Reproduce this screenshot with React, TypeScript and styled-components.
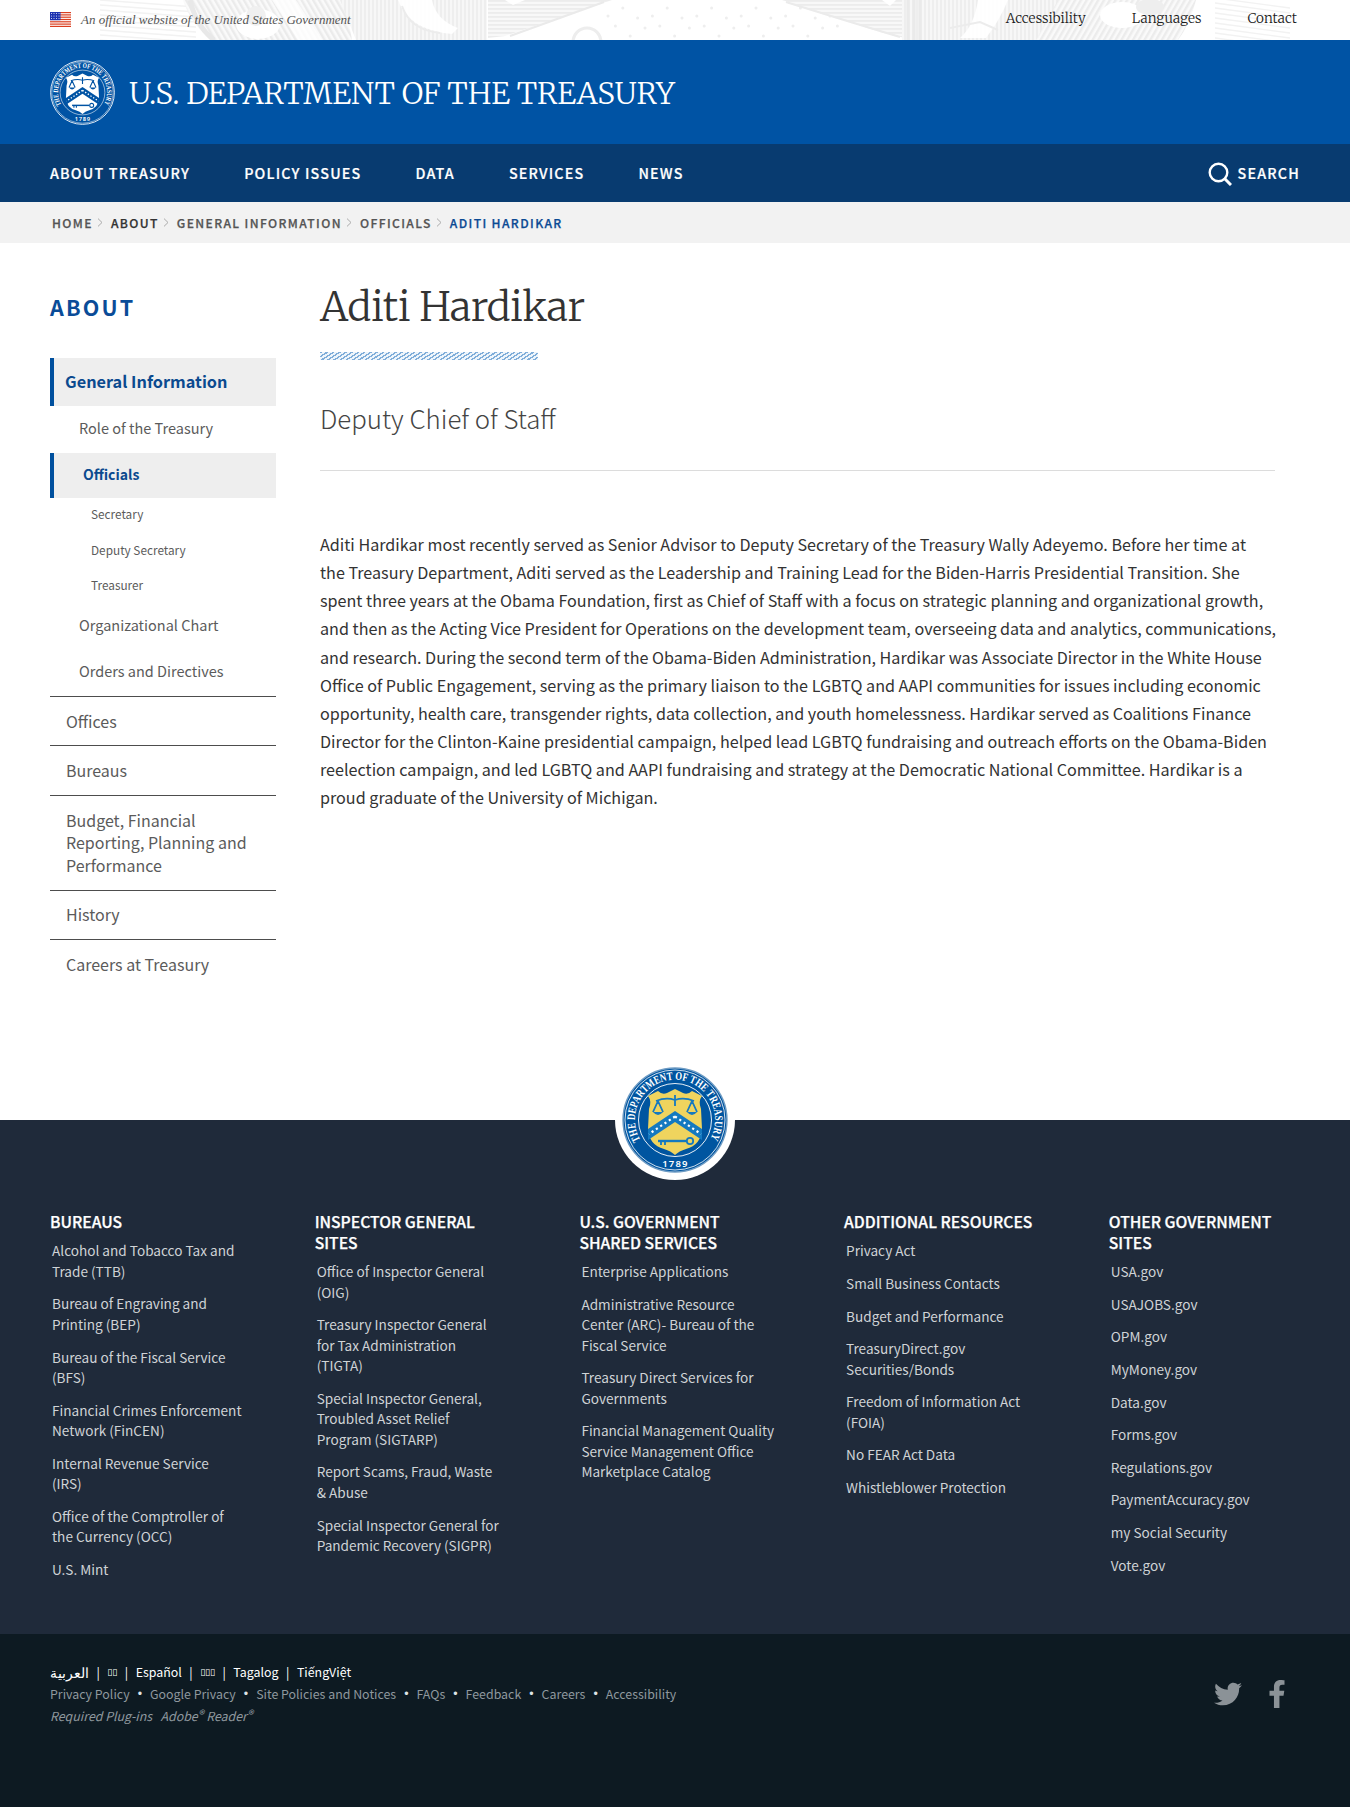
import React from "react";
import styled, { createGlobalStyle } from "styled-components";
import { FaTwitter, FaFacebookF } from "react-icons/fa";

const sans = `"Noto Sans CJK SC", "Noto Sans", sans-serif`;
const serif = `"Merriweather", "Liberation Serif", serif`;

const Global = createGlobalStyle`
  * { box-sizing: border-box; }
  body { margin: 0; background: #fff; color: #323a45; font-family: ${sans}; }
  a { color: inherit; text-decoration: none; }
  ul { list-style: none; margin: 0; padding: 0; }
`;

const Banner = styled.div`
  height: 40px;
  display: grid;
  background: #fff;
  overflow: hidden;
  > * { grid-area: 1 / 1; }
`;
const Engraving = styled.svg`
  width: 1350px;
  height: 40px;
  display: block;
  opacity: 0.9;
`;
const BannerRow = styled.div`
  display: flex;
  align-items: flex-start;
  justify-content: space-between;
  padding: 9px 53px 0 50px;
  z-index: 1;
`;
const Official = styled.div`
  display: flex;
  align-items: center;
  gap: 10px;
  padding-top: 2px;
  font: italic 13px/17px "Liberation Serif", serif;
  color: #555;
`;
const TopLinks = styled.nav`
  display: flex;
  gap: 46px;
  font: 300 13.6px/20px ${serif};
  color: #1c1c1c;
`;

const Brand = styled.header`
  height: 104px;
  display: flex;
  align-items: center;
  gap: 14px;
  padding: 0 50px;
  background: #0053a4;
`;
const BrandName = styled.div`
  padding-top: 2px;
  font: 300 30px/40px ${serif};
  letter-spacing: -0.19px;
  color: #fff;
  white-space: nowrap;
`;
const Nav = styled.nav`
  height: 58px;
  display: flex;
  align-items: center;
  gap: 54px;
  padding: 0 50px 2px;
  background: #083b70;
  color: #fff;
  font-size: 14.3px;
  font-weight: 500;
  letter-spacing: 1.18px;
  -webkit-text-stroke: 0.2px currentColor;
`;
const SearchLink = styled.a`
  display: flex;
  align-items: center;
  gap: 6px;
  margin-left: auto;
  svg { margin-top: 4px; }
`;

const Crumbs = styled.nav`
  height: 41px;
  display: flex;
  align-items: center;
  padding: 0 52px 1px;
  background: #f2f2f2;
  font-size: 12.1px;
  font-weight: 500;
  letter-spacing: 1.38px;
  -webkit-text-stroke: 0.25px currentColor;
`;
const Crumb = styled.a<{ $current?: boolean; $dark?: boolean }>`
  color: ${(p) => (p.$current ? "#0b4a94" : p.$dark ? "#333" : "#555")};
`;
const Chevron = styled.svg`
  width: 6px;
  height: 9px;
  margin: 1px 8px 0 4px;
`;

const Main = styled.main`
  display: grid;
  grid-template-columns: 226px 955px;
  column-gap: 44px;
  padding: 0 50px;
  height: 877px;
`;
const Side = styled.aside`
  padding-top: 49px;
`;
const SideTitle = styled.h2`
  margin: 0 0 36px;
  font-size: 21.5px;
  line-height: 30px;
  font-weight: 700;
  letter-spacing: 2.2px;
  color: #0a4c98;
`;
const Item = styled.li<{ $level: 1 | 2 | 3; $active?: boolean; $rule?: boolean }>`
  display: flex;
  align-items: center;
  color: ${(p) => (p.$active ? "#0b4a8f" : "#5b5b5b")};
  font-weight: ${(p) => (p.$active ? 700 : 400)};
  background: ${(p) => (p.$active ? "#eee" : "transparent")};
  border-left: ${(p) => (p.$active ? "4px solid #00509e" : "0")};
  border-top: ${(p) => (p.$rule ? "1px solid #4d4d4d" : "0")};
  font-size: ${(p) => (p.$level === 1 ? (p.$active ? 16.3 : 16) : p.$level === 2 ? (p.$active ? 14 : 14.5) : 11.8)}px;
  line-height: 22.75px;
  min-height: ${(p) => (p.$rule ? 0 : p.$level === 1 ? 48 : p.$level === 2 ? (p.$active ? 45 : 46.5) : 35.2)}px;
  padding: ${(p) => (p.$rule ? "12.8px 20px 12.8px" : p.$level === 3 ? "0 20px 0.8px" : "0 20px 2px")}
    ${(p) => (p.$active ? [11, 29][p.$level - 1] : [16, 29, 41][p.$level - 1])}px;
`;

const Article = styled.article`
  padding-top: 37px;
`;
const Name = styled.h1`
  margin: 0 0 18px;
  font: 300 40px/54px ${serif};
  letter-spacing: -0.35px;
  color: #333;
`;
const Hatch = styled.div`
  width: 218px;
  height: 8px;
  background: repeating-linear-gradient(147deg, #7fadd9 0 1.4px, #eef5fb 1.4px 3.4px);
`;
const Role = styled.h3`
  margin: 0;
  padding: 35px 0 29px;
  border-bottom: 1px solid #dcdcdc;
  font-size: 25.8px;
  line-height: 46px;
  font-weight: 300;
  color: #444;
`;
const Bio = styled.p`
  margin: 59px 0 0;
  font-size: 16.15px;
  line-height: 28.13px;
  white-space: pre;
  color: #333;
`;

const Footer = styled.footer`
  background: #1f2a3a;
  color: #d6d7d9;
`;
const SealWrap = styled.div`
  display: flex;
  justify-content: center;
  height: 91px;
`;
const SealDisc = styled.div`
  width: 120px;
  height: 120px;
  margin-top: -60px;
  border-radius: 50%;
  background: #fff;
  display: flex;
  align-items: center;
  justify-content: center;
`;
const Columns = styled.div`
  display: grid;
  grid-template-columns: repeat(5, 264.7px);
  height: 423px;
  padding: 1px 0 0 50px;
`;
const ColTitle = styled.h4`
  margin: 0 0 7.6px;
  font-size: 15.7px;
  line-height: 20.8px;
  font-weight: 500;
  color: #fff;
  white-space: pre;
  -webkit-text-stroke: 0.25px currentColor;
`;
const ColLink = styled.li`
  padding-left: 2px;
  margin-bottom: 12.1px;
  font-size: 13.6px;
  line-height: 20.5px;
  white-space: pre;
  color: #cfd3d6;
`;
const Bottom = styled.div`
  display: flex;
  justify-content: space-between;
  height: 173px;
  padding: 27px 59px 0 50px;
  background: #0d1a22;
`;
const Legal = styled.div`
  font-size: 12.4px;
  line-height: 22px;
  color: #8f989e;
`;
const Langs = styled.div`
  display: flex;
  gap: 7.5px;
  color: #fff;
`;
const Arabic = styled.span`
  font-size: 13.5px;
`;
const Tofu = styled.span`
  font: 9px/22px "DejaVu Sans", sans-serif;
`;
const LegalRow = styled.div`
  display: flex;
  gap: 8px;
`;
const Dot = styled.span`
  font-family: "Liberation Sans", sans-serif;
  color: #dfe3e6;
`;
const Plugins = styled.div`
  font-style: italic;
  sup { font-size: 12px; line-height: 0; vertical-align: 2px; }
`;
const Social = styled.div`
  display: flex;
  gap: 21px;
  padding-top: 19px;
  color: #8b9297;
`;

const Flag = () => (
  <svg width="21" height="15" viewBox="0 0 21 15">
    <rect width="21" height="15" fill="#fff" />
    {[0, 1, 2, 3, 4, 5, 6].map((i) => (
      <rect key={i} y={i * 2.3} width="21" height="1.2" fill="#db3e1f" />
    ))}
    <rect width="10.5" height="8.2" fill="#1e33b1" />
    {[0, 1, 2].map((r) =>
      [0, 1, 2, 3].map((c) => <circle key={`${r}${c}`} cx={1.5 + c * 2.5} cy={1.5 + r * 2.5} r="0.5" fill="#fff" />)
    )}
  </svg>
);

type SealProps = { size: number; id: string; disc: string; ring: string; shield: string; mark: string };
const Seal = ({ size, id, disc, ring, shield, mark }: SealProps) => (
  <svg width={size} height={size} viewBox="0 0 106 106">
    <defs>
      <path id={id} d="M18.5 73 A40 40 0 1 1 87.5 73" />
    </defs>
    <circle cx="53" cy="53" r="52" fill={disc} stroke={ring} strokeWidth="1.4" />
    <circle cx="53" cy="53" r="50" fill="none" stroke="#fff" strokeWidth="0.8" />
    <circle cx="53" cy="53" r="36.5" fill="none" stroke="#fff" strokeWidth="0.9" />
    <text fill="#fff" fontFamily="Liberation Serif, serif" fontWeight="700" fontSize="11.5" textLength="166" lengthAdjust="spacingAndGlyphs">
      <textPath href={`#${id}`}>THE DEPARTMENT OF THE TREASURY</textPath>
    </text>
    <text x="53.5" y="100" textAnchor="middle" fill="#fff" fontFamily="Noto Sans, sans-serif" fontWeight="600" fontSize="9.5" letterSpacing="1.2">1789</text>
    <path d="M26 29 L36 24 Q40 28 45 26 L53 22 L61 26 Q66 28 70 24 L80 29 Q76 34 79 42 L80 62 Q79 78 64 82 Q57 84 53 88 Q49 84 42 82 Q27 78 26 62 L27 42 Q30 34 26 29Z" fill={shield} />
    <path d="M53 44 L80 62 V73 L53 55 L26 73 V62Z" fill={mark} />
    <path d="M53 49.5 L79 67 M53 49.5 L27 67" stroke="#fff" strokeWidth="2.2" strokeDasharray="2.2 3" fill="none" />
    <g stroke={mark} strokeWidth="1.8" fill="none">
      <path d="M34 34 Q44 30 53 33 Q62 30 72 34 M53 28 V39 M36 34 L31 45 M36 34 L41 45 M70 34 L65 45 M70 34 L75 45" />
      <path d="M36 74 H64" strokeWidth="2.4" />
      <circle cx="68" cy="74" r="3.2" />
      <path d="M39 74 V78 M43 74 V78" />
    </g>
    <path d="M31 45 Q36 51 41 45Z M65 45 Q70 51 75 45Z" fill={mark} />
  </svg>
);

const range = (n: number) => Array.from({ length: n }, (_, i) => i);

const BannerArt = () => (
  <Engraving viewBox="0 0 1350 40">
    <defs>
      <pattern id="vline" width="4" height="4" patternUnits="userSpaceOnUse">
        <rect width="4" height="4" fill="#f7f7f7" /><rect width="2" height="4" fill="#ededed" />
      </pattern>
      <pattern id="hline" width="4" height="4" patternUnits="userSpaceOnUse">
        <rect width="4" height="4" fill="#f8f8f8" /><rect width="4" height="1.8" fill="#ebebeb" />
      </pattern>
      <pattern id="fall" width="5" height="5" patternUnits="userSpaceOnUse" patternTransform="rotate(-30)">
        <rect width="5" height="5" fill="#fafafa" /><rect width="2.4" height="5" fill="#e9e9e9" />
      </pattern>
      <pattern id="rise" width="5" height="5" patternUnits="userSpaceOnUse" patternTransform="rotate(30)">
        <rect width="5" height="5" fill="#fafafa" /><rect width="2.4" height="5" fill="#eaeaea" />
      </pattern>
    </defs>
    <g stroke="#f1f1f1" strokeWidth="1.3">
      {range(9).map((i) => <path key={i} d={`M100 ${i * 5} L196 ${i * 5 + 7} M1215 ${i * 5 - 2} L1290 ${i * 5 + 8}`} />)}
    </g>
    <path d="M183 0 H345 L352 40 H212 Q192 26 183 0Z" fill="url(#fall)" />
    <path d="M190 0 Q196 26 214 40" stroke="#e6e6e6" strokeWidth="5" fill="none" />
    <ellipse cx="258" cy="24" rx="22" ry="15" fill="#fff" />
    <circle cx="256" cy="16" r="10" fill="#efefef" />
    <path d="M272 0 H296 L322 40 H298Z" fill="#fff" opacity="0.8" />
    <path d="M340 0 H487 V40 H356Z" fill="url(#vline)" />
    <path d="M398 0 H432 Q436 20 458 28 L452 34 Q408 30 398 0Z" fill="#fff" opacity="0.9" />
    <path d="M402 6 Q410 30 440 33" stroke="#ebebeb" strokeWidth="2" fill="none" />
    <path d="M488 0 H612 L505 36 L488 38Z" fill="url(#hline)" />
    <path d="M505 0 H525 L513 5Z" fill="#fff" />
    <path d="M604 2 L510 36" stroke="#e8e8e8" strokeWidth="2" />
    <circle cx="587" cy="42" r="14" fill="none" stroke="#ececec" strokeWidth="3" />
    {range(32).map((i) => <circle key={i} cx={608 + i * 7.4} cy={[16, 26, 8, 36, 18, 28][i % 6]} r="1.5" fill="#ededed" />)}
    <path d="M782 0 H905 V38 L880 32Z" fill="url(#hline)" />
    <path d="M786 2 Q850 22 900 37" stroke="#e9e9e9" strokeWidth="2" fill="none" />
    <path d="M882 0 H896 L890 6Z" fill="#fff" />
    <path d="M902 0 H1060 L1040 40 H902Z" fill="url(#vline)" />
    <path d="M908 0 V40 M914 0 V40 M920 0 V40" stroke="#e8e8e8" strokeWidth="3" />
    <path d="M978 0 H1008 Q1000 20 986 38 H960 Q974 26 978 0Z" fill="#fff" opacity="0.9" />
    <path d="M950 28 L980 22 L998 30" stroke="#ebebeb" strokeWidth="2" fill="none" />
    <path d="M1058 0 H1208 Q1200 24 1184 40 H1036Z" fill="url(#rise)" />
    <ellipse cx="1122" cy="15" rx="22" ry="13" fill="#fff" />
    <ellipse cx="1150" cy="7" rx="14" ry="8" fill="#ededed" />
    <path d="M1196 0 H1215 Q1208 24 1196 40 H1178 Q1190 24 1196 0Z" fill="#fff" />
  </Engraving>
);

const crumbs = ["HOME", "ABOUT", "GENERAL INFORMATION", "OFFICIALS", "ADITI HARDIKAR"];

const menu: { t: string; l: 1 | 2 | 3; active?: boolean; rule?: boolean }[] = [
  { t: "General Information", l: 1, active: true },
  { t: "Role of the Treasury", l: 2 },
  { t: "Officials", l: 2, active: true },
  { t: "Secretary", l: 3 },
  { t: "Deputy Secretary", l: 3 },
  { t: "Treasurer", l: 3 },
  { t: "Organizational Chart", l: 2 },
  { t: "Orders and Directives", l: 2 },
  { t: "Offices", l: 1, rule: true },
  { t: "Bureaus", l: 1, rule: true },
  { t: "Budget, Financial Reporting, Planning and Performance", l: 1, rule: true },
  { t: "History", l: 1, rule: true },
  { t: "Careers at Treasury", l: 1, rule: true },
];

const bio = `Aditi Hardikar most recently served as Senior Advisor to Deputy Secretary of the Treasury Wally Adeyemo. Before her time at
the Treasury Department, Aditi served as the Leadership and Training Lead for the Biden-Harris Presidential Transition. She
spent three years at the Obama Foundation, first as Chief of Staff with a focus on strategic planning and organizational growth,
and then as the Acting Vice President for Operations on the development team, overseeing data and analytics, communications,
and research. During the second term of the Obama-Biden Administration, Hardikar was Associate Director in the White House
Office of Public Engagement, serving as the primary liaison to the LGBTQ and AAPI communities for issues including economic
opportunity, health care, transgender rights, data collection, and youth homelessness. Hardikar served as Coalitions Finance
Director for the Clinton-Kaine presidential campaign, helped lead LGBTQ fundraising and outreach efforts on the Obama-Biden
reelection campaign, and led LGBTQ and AAPI fundraising and strategy at the Democratic National Committee. Hardikar is a
proud graduate of the University of Michigan.`;

const columns = [
  {
    title: "BUREAUS",
    links: ["Alcohol and Tobacco Tax and\nTrade (TTB)", "Bureau of Engraving and\nPrinting (BEP)", "Bureau of the Fiscal Service\n(BFS)", "Financial Crimes Enforcement\nNetwork (FinCEN)", "Internal Revenue Service\n(IRS)", "Office of the Comptroller of\nthe Currency (OCC)", "U.S. Mint"],
  },
  {
    title: "INSPECTOR GENERAL\nSITES",
    links: ["Office of Inspector General\n(OIG)", "Treasury Inspector General\nfor Tax Administration\n(TIGTA)", "Special Inspector General,\nTroubled Asset Relief\nProgram (SIGTARP)", "Report Scams, Fraud, Waste\n& Abuse", "Special Inspector General for\nPandemic Recovery (SIGPR)"],
  },
  {
    title: "U.S. GOVERNMENT\nSHARED SERVICES",
    links: ["Enterprise Applications", "Administrative Resource\nCenter (ARC)- Bureau of the\nFiscal Service", "Treasury Direct Services for\nGovernments", "Financial Management Quality\nService Management Office\nMarketplace Catalog"],
  },
  {
    title: "ADDITIONAL RESOURCES",
    links: ["Privacy Act", "Small Business Contacts", "Budget and Performance", "TreasuryDirect.gov\nSecurities/Bonds", "Freedom of Information Act\n(FOIA)", "No FEAR Act Data", "Whistleblower Protection"],
  },
  {
    title: "OTHER GOVERNMENT\nSITES",
    links: ["USA.gov", "USAJOBS.gov", "OPM.gov", "MyMoney.gov", "Data.gov", "Forms.gov", "Regulations.gov", "PaymentAccuracy.gov", "my Social Security", "Vote.gov"],
  },
];

const legal = ["Privacy Policy", "Google Privacy", "Site Policies and Notices", "FAQs", "Feedback", "Careers", "Accessibility"];

export default function App() {
  return (
    <>
      <Global />
      <Banner>
        <BannerArt />
        <BannerRow>
          <Official><Flag />An official website of the United States Government</Official>
          <TopLinks><a>Accessibility</a><a>Languages</a><a>Contact</a></TopLinks>
        </BannerRow>
      </Banner>
      <Brand>
        <Seal size={65} id="ring-top" disc="#0053a4" ring="#fff" shield="#fff" mark="#0053a4" />
        <BrandName>U.S. DEPARTMENT OF THE TREASURY</BrandName>
      </Brand>
      <Nav>
        {["ABOUT TREASURY", "POLICY ISSUES", "DATA", "SERVICES", "NEWS"].map((t) => <a key={t}>{t}</a>)}
        <SearchLink>
          <svg width="24" height="24" viewBox="0 0 24 24" fill="none" stroke="#fff" strokeWidth="2.4">
            <circle cx="10.5" cy="10.5" r="8.8" />
            <path d="M16.8 16.8 L23 23" strokeWidth="3" />
          </svg>
          SEARCH
        </SearchLink>
      </Nav>
      <Crumbs>
        {crumbs.map((t, i) => (
          <React.Fragment key={t}>
            {i > 0 && <Chevron viewBox="0 0 6 9"><path d="M1 .6 L5 4.5 L1 8.4" fill="none" stroke="#aaa" /></Chevron>}
            <Crumb $current={i === 4} $dark={i === 1}>{t}</Crumb>
          </React.Fragment>
        ))}
      </Crumbs>
      <Main>
        <Side>
          <SideTitle>ABOUT</SideTitle>
          <ul>
            {menu.map((m) => <Item key={m.t} $level={m.l} $active={m.active} $rule={m.rule}>{m.t}</Item>)}
          </ul>
        </Side>
        <Article>
          <Name>Aditi Hardikar</Name>
          <Hatch />
          <Role>Deputy Chief of Staff</Role>
          <Bio>{bio}</Bio>
        </Article>
      </Main>
      <Footer>
        <SealWrap>
          <SealDisc>
            <Seal size={106} id="ring-foot" disc="#0055a0" ring="#6f9cc4" shield="#efd45e" mark="#1479c0" />
          </SealDisc>
        </SealWrap>
        <Columns>
          {columns.map((c) => (
            <div key={c.title}>
              <ColTitle>{c.title}</ColTitle>
              <ul>{c.links.map((l) => <ColLink key={l}>{l}</ColLink>)}</ul>
            </div>
          ))}
        </Columns>
        <Bottom>
          <Legal>
            <Langs>
              <Arabic>العربية</Arabic><span>|</span><Tofu>▯▯</Tofu><span>|</span><span>Español</span><span>|</span>
              <Tofu>▯▯▯</Tofu><span>|</span><span>Tagalog</span><span>|</span><span>TiếngViệt</span>
            </Langs>
            <LegalRow>
              {legal.map((t, i) => (
                <React.Fragment key={t}>{i > 0 && <Dot>•</Dot>}<a>{t}</a></React.Fragment>
              ))}
            </LegalRow>
            <Plugins>Required Plug-ins &nbsp; Adobe<sup>®</sup> Reader<sup>®</sup></Plugins>
          </Legal>
          <Social><FaTwitter size={28} /><FaFacebookF size={28} /></Social>
        </Bottom>
      </Footer>
    </>
  );
}
